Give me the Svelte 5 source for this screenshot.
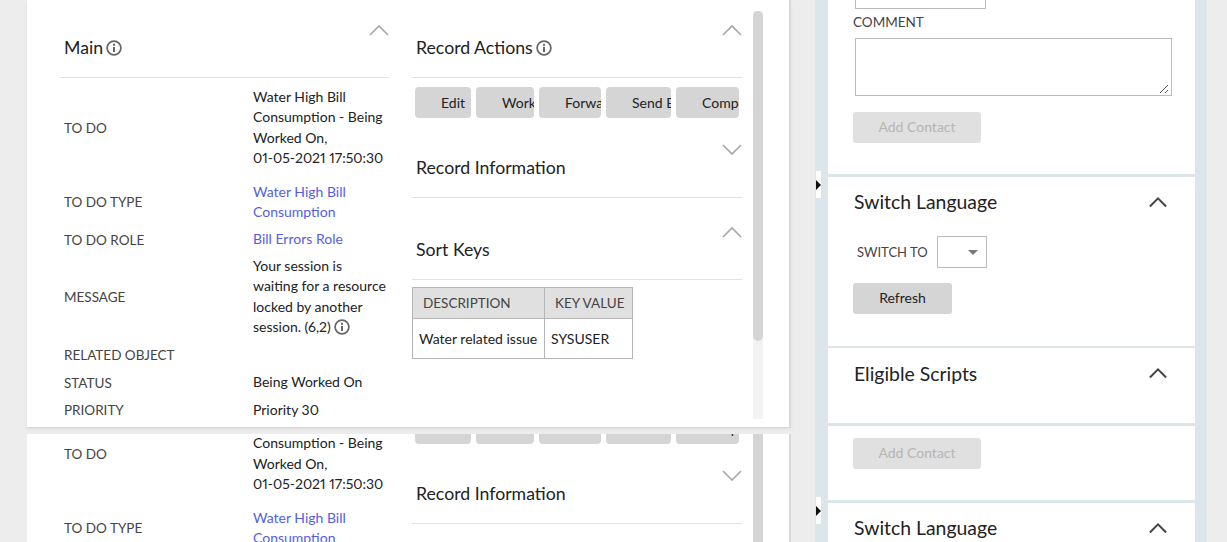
<script>
  const buttons = ['Edit', 'Work', 'Forward', 'Send Back', 'Complete'];
  const widths = [56, 58, 62, 65, 63];
</script>

{#snippet info()}
  <svg class="info" viewBox="0 0 16 16" aria-hidden="true">
    <circle cx="8" cy="8" r="6.9" fill="none" stroke="#666" stroke-width="1.7"/>
    <rect x="7" y="7" width="2" height="5" fill="#666"/>
    <rect x="7" y="3.8" width="2" height="2" fill="#666"/>
  </svg>
{/snippet}

{#snippet chevron(dir, cls)}
  <svg class={cls} viewBox="0 0 20 12" aria-hidden="true">
    {#if dir === 'up'}
      <path d="M1 11 L10 2 L19 11" fill="none" stroke="currentColor" stroke-width="1.7"/>
    {:else}
      <path d="M1 1 L10 10 L19 1" fill="none" stroke="currentColor" stroke-width="1.7"/>
    {/if}
  </svg>
{/snippet}

{#snippet record()}
  <div class="record">
    <section class="col main">
      <header class="head">
        <h2>Main {@render info()}</h2>
        {@render chevron('up', 'chev')}
      </header>
      <dl class="fields">
        <dt class="tall">TO DO</dt>
        <dd class="tall">Water High Bill Consumption - Being Worked On,<br/>01-05-2021 17:50:30</dd>
        <dt>TO DO TYPE</dt>
        <dd><a href="#type">Water High Bill Consumption</a></dd>
        <dt>TO DO ROLE</dt>
        <dd><a href="#role">Bill Errors Role</a></dd>
        <dt class="pull">MESSAGE</dt>
        <dd class="pull">Your session is waiting for a resource locked by another session. (6,2) {@render info()}</dd>
        <dt class="push">RELATED OBJECT</dt>
        <dd class="push"></dd>
        <dt>STATUS</dt>
        <dd>Being Worked On</dd>
        <dt>PRIORITY</dt>
        <dd>Priority 30</dd>
      </dl>
    </section>

    <section class="col side">
      <header class="head">
        <h2>Record Actions {@render info()}</h2>
        {@render chevron('up', 'chev')}
      </header>
      <div class="actions">
        {#each buttons as b, i}
          <button class="act" style="width:{widths[i]}px">{b}</button>
        {/each}
      </div>
      <header class="head info-head">
        <h2>Record Information</h2>
        {@render chevron('down', 'chev')}
      </header>
      <header class="head keys-head">
        <h2>Sort Keys</h2>
        {@render chevron('up', 'chev')}
      </header>
      <table>
        <thead>
          <tr><th class="c1">DESCRIPTION</th><th class="c2">KEY VALUE</th></tr>
        </thead>
        <tbody>
          <tr><td>Water related issue</td><td>SYSUSER</td></tr>
        </tbody>
      </table>
    </section>

    <div class="scrollbar"><div class="thumb"></div></div>
  </div>
{/snippet}

{#snippet panels()}
  <div class="panels">
    <div class="panel first">
      <div class="stub"></div>
      <div class="comment">COMMENT</div>
      <div class="ta"><svg viewBox="0 0 10 10" aria-hidden="true"><path d="M1 9 L9 1 M6 9 L9 6" stroke="#555" stroke-width="1" fill="none"/></svg></div>
      <button class="btn off add">Add Contact</button>
    </div>
    <div class="panel lang">
      <div class="ptitle"><h3>Switch Language</h3>{@render chevron('up', 'pchev')}</div>
      <div class="switch">
        <span>SWITCH TO</span>
        <div class="sel"><i></i></div>
      </div>
      <button class="btn refresh">Refresh</button>
    </div>
    <div class="panel scripts">
      <div class="ptitle"><h3>Eligible Scripts</h3>{@render chevron('up', 'pchev')}</div>
    </div>
  </div>
{/snippet}

<div class="page">
  <div class="left">
    <div class="card top">{@render record()}</div>
    <div class="card bottom"><div class="shift">{@render record()}</div></div>
  </div>

  <div class="right">
    <div class="rtop">{@render panels()}</div>
    <div class="rbottom"><div class="rshift">{@render panels()}</div></div>
    <div class="handle h1"></div>
    <div class="handle h2"></div>
  </div>
</div>

<style>
  :global(body) {
    margin: 0;
    background: #ededed;
  }
  .page {
    display: flex;
    height: 542px;
    overflow: hidden;
    padding-left: 27px;
    font-family: Lato, "Liberation Sans", sans-serif;
    font-size: 14px;
    font-variant-numeric: proportional-nums;
    color: #222;
    box-sizing: border-box;
  }
  .left {
    width: 764px;
    flex: none;
  }
  .card {
    background: #fff;
    border-right: 2px solid #d9d9d9;
    overflow: hidden;
  }
  .card.top {
    height: 427px;
    box-shadow: 0 1px 0 #d8d8d8, 0 3px 3px #e2e2e2;
    position: relative;
    z-index: 1;
  }
  .card.bottom {
    height: 108px;
    margin-top: 7px;
  }
  .shift {
    margin-top: -108px;
  }
  .record {
    display: flex;
    padding-left: 33px;
  }
  .col {
    flex: none;
  }
  .main {
    width: 329px;
  }
  .side {
    width: 330px;
    margin-left: 23px;
  }
  .head {
    display: flex;
    justify-content: space-between;
    height: 77px;
    border-bottom: 1px solid #e2e2e2;
    position: relative;
  }
  h2 {
    margin: 35px 0 0 4px;
    font-size: 17.7px;
    font-weight: 400;
    line-height: 26px;
    color: #222;
    display: flex;
    align-items: center;
    gap: 3px;
    height: 26px;
  }
  .chev {
    width: 20px;
    height: 12px;
    margin: 24px 0 0 0;
    color: #a9a9a9;
    flex: none;
  }
  .info {
    width: 16px;
    height: 16px;
    flex: none;
  }
  dd .info {
    vertical-align: -3px;
  }
  .fields {
    margin: 9px 0 0;
    display: grid;
    grid-template-columns: 189px 1fr;
    row-gap: 7px;
    padding-left: 4px;
    align-items: center;
  }
  dt {
    font-size: 13.5px;
    color: #444;
    line-height: 20px;
  }
  dd {
    margin: 0;
    line-height: 20.4px;
    min-height: 20px;
    max-width: 137px;
  }
  .tall {
    margin-bottom: 6px;
  }
  .pull {
    margin-top: -1px;
  }
  .push {
    margin-top: 1px;
  }
  dd a {
    color: #5560e0;
    text-decoration: none;
  }
  .actions {
    display: flex;
    gap: 5px;
    padding: 9px 0 0 3px;
    height: 31px;
  }
  .act {
    flex: none;
    height: 31px;
    background: #d5d5d5;
    border: 0;
    border-radius: 4px;
    padding: 0 0 0 26px;
    overflow: hidden;
    white-space: nowrap;
    text-align: left;
    font: inherit;
    color: #222;
  }
  .info-head {
    height: 79px;
  }
  .info-head h2 {
    margin-top: 37px;
  }
  .info-head .chev {
    margin-top: 26px;
  }
  .keys-head {
    height: 81px;
  }
  .keys-head h2 {
    margin-top: 39px;
  }
  .keys-head .chev {
    margin-top: 28px;
  }
  table {
    margin-top: 7px;
    border-collapse: collapse;
    border: 1px solid #b5b5b5;
    table-layout: fixed;
    width: 221px;
  }
  th {
    background: #e0e0e0;
    border: 1px solid #b5b5b5;
    height: 30px;
    font-weight: 400;
    color: #444;
    padding: 0 0 0 10px;
    font-size: 13.5px;
    text-align: left;
    white-space: nowrap;
  }
  .c1 {
    width: 121px;
  }
  td {
    border: 1px solid #b5b5b5;
    height: 38px;
    padding: 0 0 1px 6px;
    white-space: nowrap;
  }
  .scrollbar {
    flex: none;
    width: 10px;
    margin: 11px 0 0 11px;
    height: 408px;
    background: #f3f3f3;
  }
  .thumb {
    height: 330px;
    background: #d5d5d5;
    border-radius: 5px;
  }
  .right {
    margin-left: 24px;
    width: 392px;
    flex: none;
    background: #dce5ea;
    position: relative;
    padding: 0 12px 0 13px;
    box-sizing: border-box;
  }
  .rtop {
    height: 423px;
    overflow: hidden;
  }
  .rbottom {
    margin-top: 3px;
    height: 116px;
    overflow: hidden;
  }
  .rshift {
    margin-top: -100px;
  }
  .panels {
    display: flex;
    flex-direction: column;
  }
  .panel {
    background: #fff;
    padding-left: 25px;
    box-sizing: border-box;
  }
  .panel.first {
    height: 174px;
    margin-bottom: 3px;
  }
  .panel.lang {
    height: 169px;
    margin-bottom: 2px;
  }
  .panel.scripts {
    height: 75px;
    margin-bottom: 3px;
  }
  .lang h3 {
    margin-bottom: 2px;
  }
  .stub {
    width: 129px;
    height: 8px;
    margin-left: 2px;
    border: 1px solid #bbb;
    border-top: 0;
  }
  .comment {
    margin-top: 3px;
    line-height: 20px;
    color: #444;
    font-size: 13.5px;
  }
  .ta {
    margin: 6px 0 0 2px;
    width: 317px;
    height: 58px;
    border: 1px solid #bbb;
    box-sizing: border-box;
    display: flex;
    justify-content: flex-end;
    align-items: flex-end;
  }
  .ta svg {
    width: 10px;
    height: 10px;
    margin: 0 2px 1px 0;
  }
  .btn {
    display: block;
    height: 31px;
    border: 0;
    border-radius: 3px;
    font: inherit;
    padding: 0 0 2px;
  }
  .add {
    width: 128px;
    margin-top: 16px;
  }
  .off {
    background: #e0e0e0;
    color: #b5b5b5;
  }
  .refresh {
    width: 99px;
    background: #d5d5d5;
    color: #222;
    margin-top: 15px;
  }
  .ptitle {
    display: flex;
    justify-content: space-between;
    align-items: center;
    padding-top: 11px;
    padding-right: 28px;
    height: 28px;
  }
  h3 {
    margin: 0 0 0 1px;
    font-size: 19.4px;
    font-weight: 400;
    color: #222;
  }
  .pchev {
    width: 18px;
    height: 12px;
    color: #444;
  }
  .pchev :global(path) {
    stroke-width: 2.2;
  }
  .switch {
    display: flex;
    align-items: center;
    margin-top: 20px;
    padding-left: 4px;
    font-size: 13px;
    color: #444;
    height: 32px;
  }
  .switch span {
    width: 80px;
  }
  .sel {
    width: 50px;
    height: 32px;
    border: 1px solid #bbb;
    box-sizing: border-box;
    position: relative;
  }
  .sel i {
    position: absolute;
    left: 30px;
    top: 13px;
    border: 5px solid transparent;
    border-top: 5px solid #777;
    border-bottom: 0;
  }
  .handle {
    position: absolute;
    left: 1px;
    width: 5px;
    height: 27px;
    background: #fff;
  }
  .handle::after {
    content: "";
    position: absolute;
    left: 0;
    top: 9px;
    border-left: 5px solid #111;
    border-top: 5px solid transparent;
    border-bottom: 5px solid transparent;
  }
  .h1 {
    top: 171px;
  }
  .h2 {
    top: 497px;
  }
</style>
